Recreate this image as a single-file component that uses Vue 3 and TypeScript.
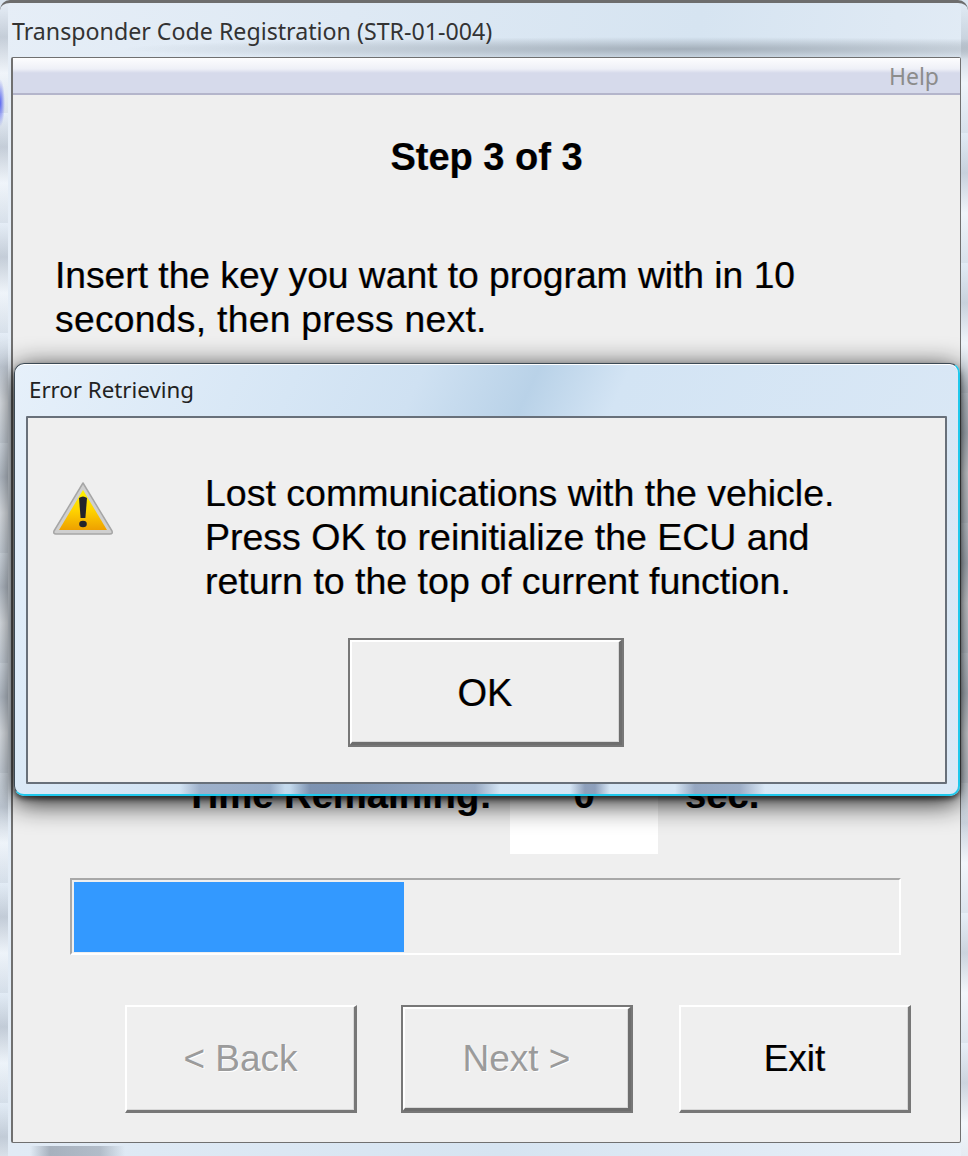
<script setup lang="ts">
const navButtons = [
  { label: '< Back', disabled: true, focused: false },
  { label: 'Next >', disabled: true, focused: true },
  { label: 'Exit', disabled: false, focused: false },
]
const progress = 40.1
const messageLines = [
  'Lost communications with the vehicle.',
  'Press OK to reinitialize the ECU and',
  'return to the top of current function.',
]
</script>

<template>
  <div class="window">
    <div class="window__title">Transponder Code Registration (STR-01-004)</div>
    <div class="client">
      <div class="menu"><span class="menu__item">Help</span></div>
      <h1 class="step">Step 3 of 3</h1>
      <p class="prompt">
        Insert the key you want to program with in 10<br />
        <span class="prompt__second">seconds, then press next.</span>
      </p>
      <div class="timer">
        <span class="timer__label">Time Remaining:</span>
        <span class="timer__value">0</span>
        <span class="timer__unit">sec.</span>
      </div>
      <div class="progress">
        <div class="progress__fill" :style="{ width: progress + '%' }"></div>
      </div>
      <div class="nav">
        <button
          v-for="b in navButtons"
          :key="b.label"
          type="button"
          class="btn nav__btn"
          :class="{ 'btn--off': b.disabled, 'btn--focus': b.focused }"
        >
          {{ b.label }}
        </button>
      </div>
    </div>

    <div class="dialog" role="alertdialog">
      <div class="dialog__title">Error Retrieving</div>
      <div class="dialog__body">
        <div class="dialog__main">
          <svg class="dialog__icon" viewBox="0 0 62 55" aria-hidden="true">
            <defs>
              <linearGradient id="warnFill" x1="0" y1="0" x2="0" y2="1">
                <stop offset="0" stop-color="#fff400" />
                <stop offset="0.5" stop-color="#ffd400" />
                <stop offset="1" stop-color="#eea000" />
              </linearGradient>
            </defs>
            <path d="M31 2 L60 50 Q61 53 58 53 L4 53 Q1 53 2 50 Z" fill="#cfcfcf" stroke="#a6a6a6" stroke-width="1.5" stroke-linejoin="round" />
            <path d="M31 9 L55 49 L7 49 Z" fill="url(#warnFill)" />
            <path d="M27 17 Q31 14 35 17 L33.4 37 L28.6 37 Z" fill="#23232b" />
            <ellipse cx="31" cy="43" rx="3.8" ry="3.2" fill="#23232b" />
          </svg>
          <p class="dialog__text">
            <template v-for="line in messageLines" :key="line">{{ line }}<br /></template>
          </p>
        </div>
        <button type="button" class="btn btn--focus dialog__ok">OK</button>
      </div>
    </div>
  </div>
</template>

<style scoped>
.window {
  position: relative;
  box-sizing: border-box;
  width: 968px;
  height: 1156px;
  padding: 0 7px 13px 11px;
  display: flex;
  flex-direction: column;
  overflow: hidden;
  border-top: 3px solid #6d6d6d;
  border-radius: 10px 10px 0 0;
  font-family: "Liberation Sans", Arial, sans-serif;
  color: #000;
  background:
    radial-gradient(ellipse 5px 24px at 0 100px, #5a66f0 0, rgba(90, 102, 240, 0) 100%),
    radial-gradient(ellipse 560px 12px at 680px 46px, rgba(130, 140, 150, 0.6) 0, rgba(130, 140, 150, 0) 100%),
    linear-gradient(90deg, transparent 30px, rgba(110, 120, 135, 0.5) 50px, rgba(110, 120, 135, 0.4) 100px, transparent 125px) 0 100% / 100% 10px no-repeat,
    repeating-linear-gradient(180deg, rgba(120, 130, 145, 0) 0, rgba(120, 130, 145, 0.3) 34px, rgba(255, 255, 255, 0.4) 70px, rgba(120, 130, 145, 0.12) 110px) 0 0 / 8px 100% no-repeat,
    repeating-linear-gradient(180deg, rgba(120, 130, 145, 0) 0, rgba(120, 130, 145, 0.25) 40px, rgba(255, 255, 255, 0.45) 80px, rgba(120, 130, 145, 0.1) 130px) 100% 0 / 7px 100% no-repeat,
    linear-gradient(100deg, #e6eef7 0, #d6e4f1 60%, #e9f0f8 100%);
}

.window__title {
  flex: none;
  height: 54px;
  padding: 13px 0 0 1px;
  box-sizing: border-box;
  font-family: "Noto Sans", sans-serif;
  font-size: 23.2px;
  line-height: 30px;
  color: #333;
}

.client {
  flex: 1;
  min-height: 0;
  display: flex;
  flex-direction: column;
  border: 1px solid #707070;
  border-left-width: 2px;
  border-radius: 2px;
  background: #efefef;
}

.menu {
  flex: none;
  height: 37px;
  display: flex;
  justify-content: flex-end;
  align-items: center;
  padding-right: 21px;
  box-sizing: border-box;
  border-bottom: 2px solid #b4b5cb;
  background: linear-gradient(180deg, #fdfdfe 0, #eef0f7 11px, #d6daeb 15px, #d6daeb 100%);
}

.menu__item {
  font-family: "Noto Sans", sans-serif;
  font-size: 23px;
  color: #8c8c8c;
}

.step,
.prompt,
.timer,
.dialog__text,
.dialog__ok,
.nav__btn:last-child {
  text-shadow: -0.5px 0 rgba(235, 130, 0, 0.45), 0.5px 0 rgba(0, 110, 235, 0.45);
}

.step {
  margin: 38px 0 0;
  text-align: center;
  font-size: 38px;
  line-height: 48px;
  font-weight: 700;
}

.prompt {
  margin: 72px 0 0 42px;
  font-size: 37.2px;
  line-height: 44px;
}

.prompt__second {
  letter-spacing: 0.32px;
}

.timer {
  display: flex;
  align-items: flex-start;
  margin: 433px 0 0 172px;
  font-size: 38.2px;
  line-height: 42px;
  font-weight: 700;
}

.timer__label {
  width: 325px;
}

.timer__value {
  width: 148px;
  height: 80px;
  background: #fff;
  text-align: center;
}

.timer__unit {
  margin-left: 27px;
}

.progress {
  box-sizing: border-box;
  height: 77px;
  margin: 24px 59px 0 57px;
  padding: 2px 2px 1px;
  border: 2px solid #fff;
  border-top-color: #a8a8a8;
  border-left-color: #a8a8a8;
}

.progress__fill {
  height: 100%;
  background: #3399ff;
}

.nav {
  display: flex;
  gap: 44px;
  margin: 50px 49px 0 112px;
}

.btn {
  box-sizing: border-box;
  border-style: solid;
  border-width: 2px 3px 3px 2px;
  border-color: #fff #777 #777 #fff;
  background: #efefef;
  color: #000;
  font-family: "Liberation Sans", Arial, sans-serif;
  font-size: 37px;
  padding: 0;
  box-shadow: inset -1px -1px 0 #d8d8d8;
}

.nav__btn {
  width: 232px;
  height: 108px;
}

.nav__btn:last-child {
  margin-left: 2px;
}

.btn--off {
  color: #9b9b9b;
  text-shadow: 1px 1px 0 #fff;
}

.btn--focus {
  outline: 2px solid #777;
  outline-offset: -2px;
  border-width: 4px 5px 5px 4px;
  border-color: #fff #6e6e6e #6e6e6e #fff;
}

.dialog {
  position: absolute;
  left: 14px;
  top: 360px;
  width: 946px;
  height: 433px;
  box-sizing: border-box;
  padding: 0 11px 10px;
  display: flex;
  flex-direction: column;
  border: 1px solid #3c4a55;
  border-bottom: 2px solid #1fc8ec;
  border-right: 2px solid #1fc8ec;
  border-radius: 10px;
  background:
    linear-gradient(90deg, transparent 165px, rgba(80, 100, 140, 0.4) 185px, rgba(80, 100, 140, 0.4) 255px, transparent 270px, transparent 275px, rgba(60, 80, 120, 0.5) 295px, rgba(60, 80, 120, 0.4) 460px, transparent 485px) 0 100% / 100% 10px no-repeat,
    linear-gradient(90deg, transparent 555px, rgba(70, 90, 130, 0.5) 570px, rgba(70, 90, 130, 0.5) 580px, transparent 595px, transparent 660px, rgba(70, 90, 130, 0.45) 680px, rgba(70, 90, 130, 0.4) 725px, transparent 750px) 0 100% / 100% 10px no-repeat,
    linear-gradient(115deg, #e6f0fa 0, #d6e6f5 25%, #cfe1f2 36%, #b9d2e8 46%, #d3e4f4 54%, #dce9f6 100%);
  box-shadow: 0 3px 5px rgba(0, 0, 0, 0.55), 0 6px 28px rgba(0, 0, 0, 0.95), inset 0 1px 0 #fff;
}

.dialog__title {
  flex: none;
  height: 52px;
  padding: 11px 0 0 3px;
  box-sizing: border-box;
  font-family: "Noto Sans", sans-serif;
  font-size: 22.3px;
  line-height: 30px;
  color: #222;
}

.dialog__body {
  flex: 1;
  min-height: 0;
  display: flex;
  flex-direction: column;
  align-items: center;
  border: 2px solid #68707a;
  border-radius: 1px;
  background: #efefef;
}

.dialog__main {
  align-self: stretch;
  display: flex;
  align-items: flex-start;
  padding: 53px 0 0 24px;
}

.dialog__icon {
  flex: none;
  width: 62px;
  height: 55px;
  margin-top: 10px;
}

.dialog__text {
  margin: 0 0 0 91px;
  font-size: 37.5px;
  line-height: 44px;
}

.dialog__ok {
  width: 276px;
  height: 109px;
  margin: 35px 2px 0 0;
  padding-top: 2px;
  font-size: 38px;
}
</style>

<style>
html,
body {
  margin: 0;
  background: #dbe6f1;
}
</style>
